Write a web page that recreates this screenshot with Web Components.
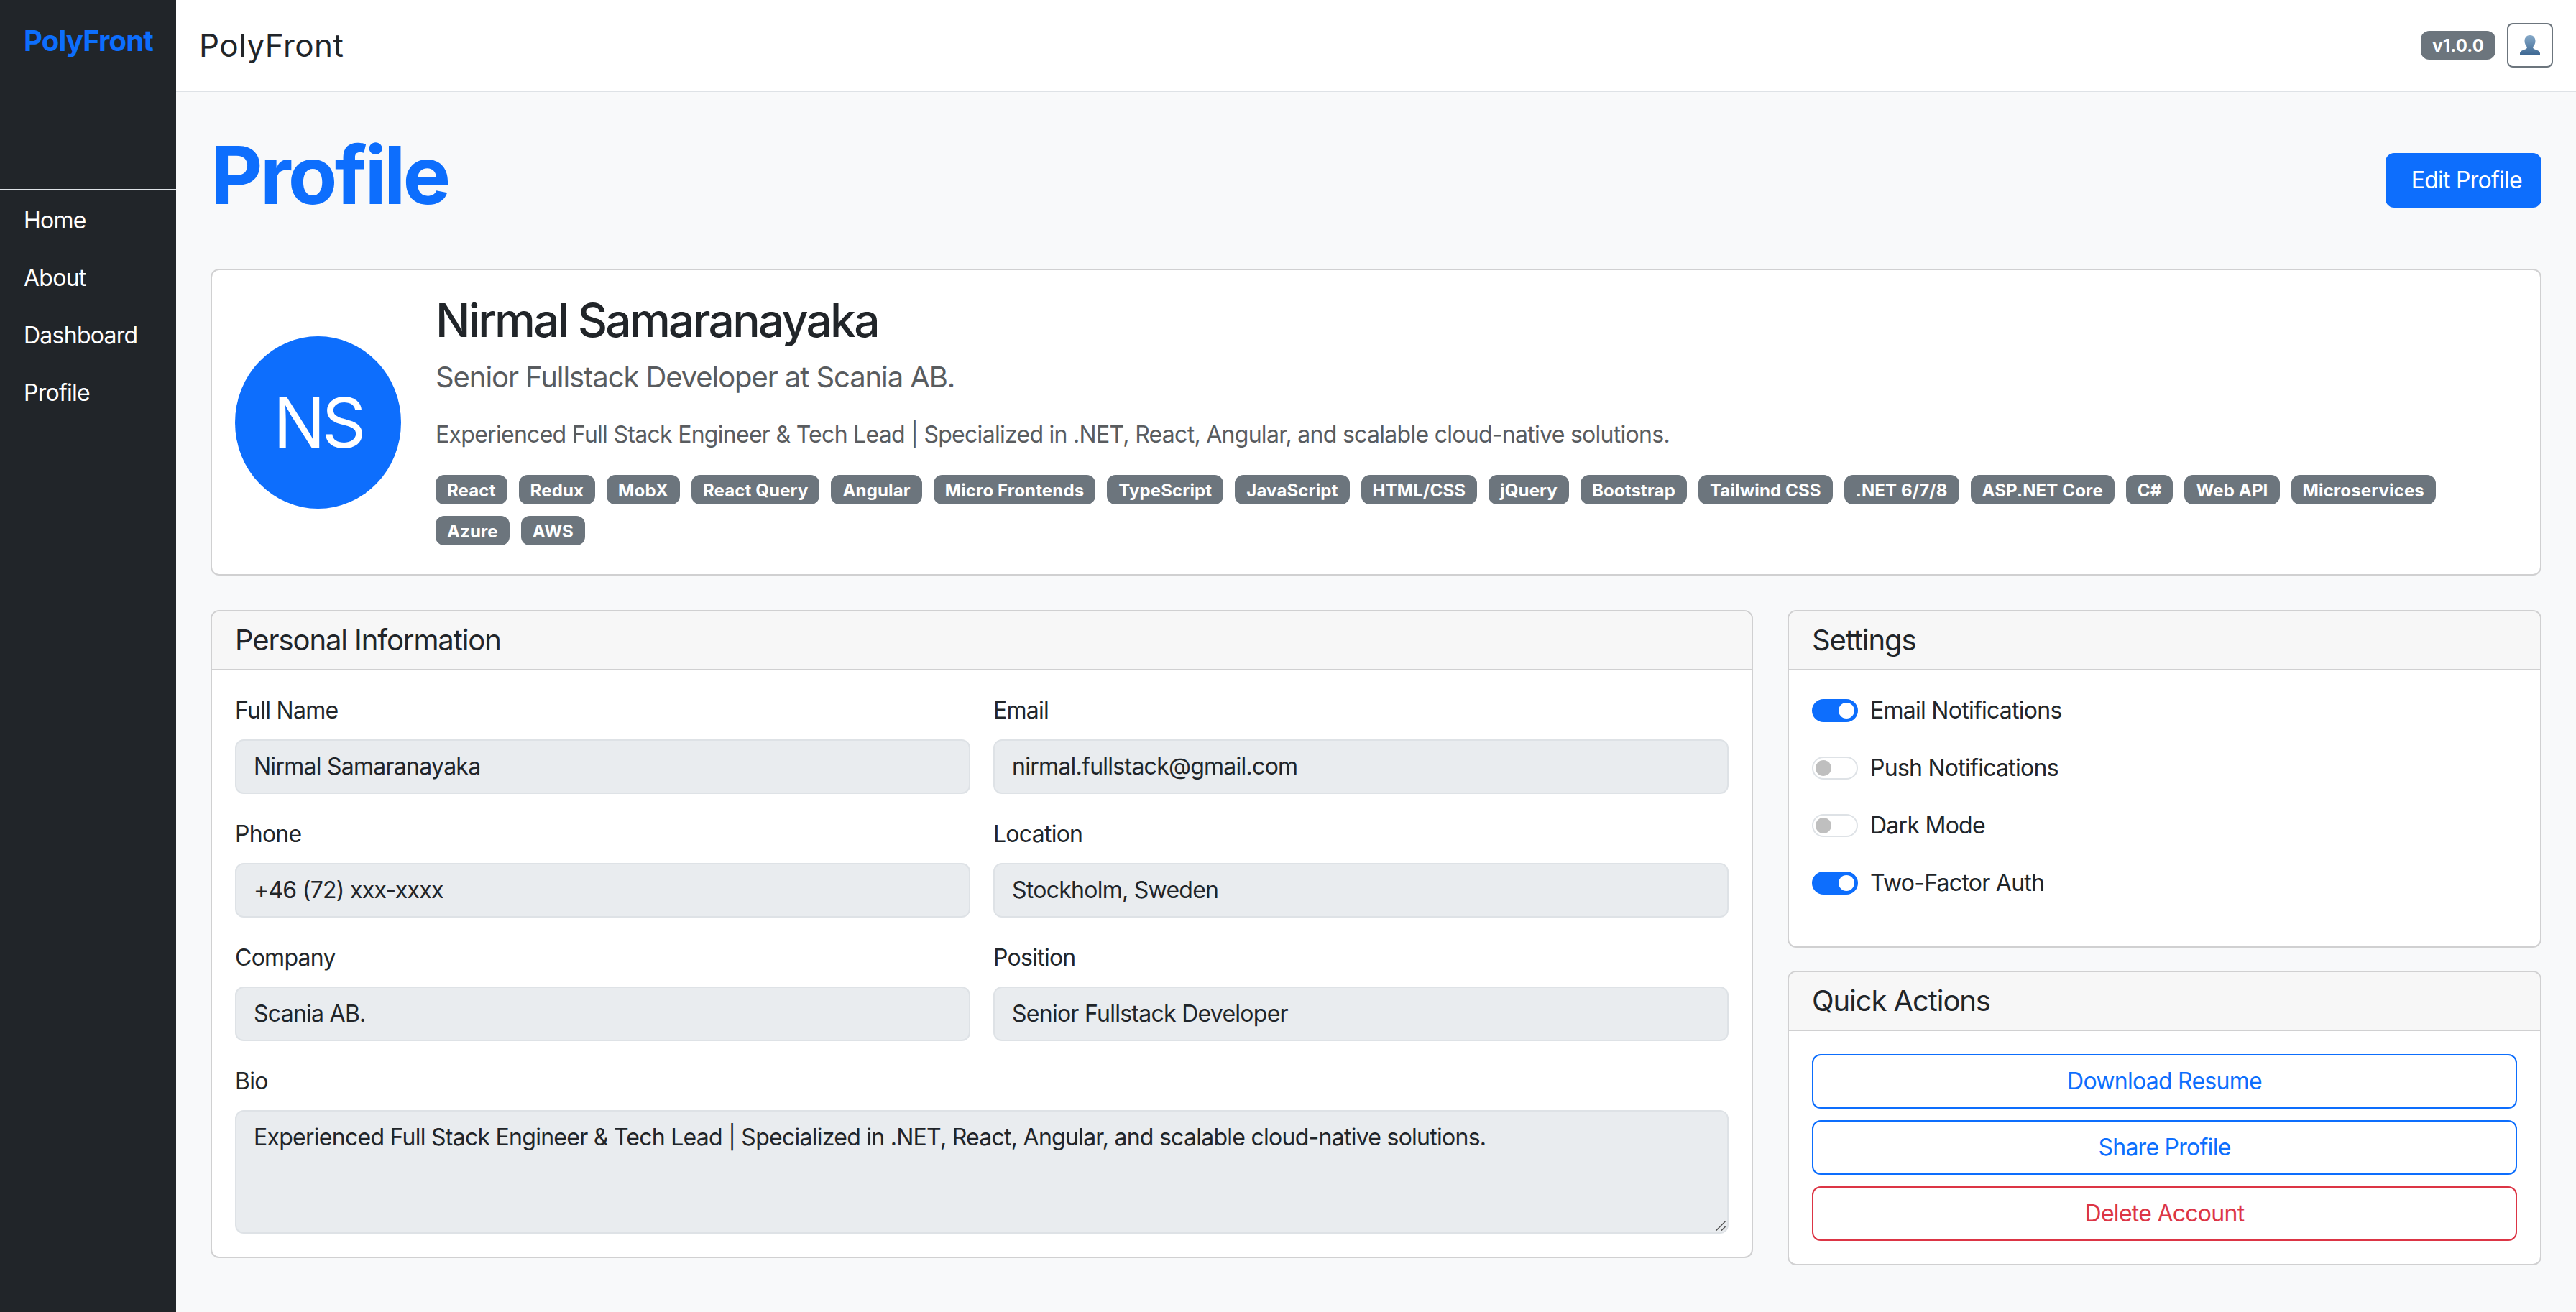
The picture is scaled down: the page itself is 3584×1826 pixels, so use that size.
<!doctype html>
<html>
<head>
<meta charset="utf-8">
<title>PolyFront</title>
<style>
  html,body {margin:0;height:100%}
  body {font-family:Inter,"Liberation Sans",sans-serif;font-size:32px;line-height:1.5;color:#212529;background:#f8f9fa}
</style>
</head>
<body>

<template id=pf-shell-template>
  <style>
    :host {display:grid;grid-template-columns:245px minmax(0,1fr);grid-template-rows:128px 1fr;height:1826px;overflow:hidden}
    .side {grid-row:1 / span 2;display:block}
    .main {display:block;padding:48px 48px 0;background:#f8f9fa}
  </style>
  <div class=side><slot name=side></slot></div>
  <slot name=top></slot>
  <div class=main><slot></slot></div>
</template>

<template id=pf-sidebar-template>
  <style>
    :host {display:flex;flex-direction:column;height:100%;background:#212529;color:#fff}
    .brand {box-sizing:border-box;height:265px;padding:33px 0 0 33px;font-size:40px;line-height:48px;font-weight:700;letter-spacing:-.021em;color:#0d6efd;border-bottom:2px solid #dee2e6}
    nav {display:flex;flex-direction:column;padding-top:2px}
  </style>
  <div class=brand id=brand></div>
  <nav><slot></slot></nav>
</template>

<template id=pf-nav-link-template>
  <style>
    :host {display:block;padding:16px 33px;font-size:32px;line-height:48px;letter-spacing:-.023em;color:#fff}
  </style>
  <slot></slot>
</template>

<template id=pf-topbar-template>
  <style>
    :host {display:flex;align-items:center;justify-content:space-between;box-sizing:border-box;height:128px;padding:0 32px;background:#fff;border-bottom:2px solid #dee2e6}
    .title {font-size:44px;line-height:66px;letter-spacing:.01em;color:#212529}
    .right {display:flex;align-items:center;gap:16px}
    .ver {font-size:24px;line-height:24px;font-weight:700;letter-spacing:.005em;color:#fff;background:#6c757d;border-radius:12px;padding:9px 16px 7px}
    .usr {display:flex;align-items:center;justify-content:center;box-sizing:border-box;width:64px;height:62px;border:2px solid #6c757d;border-radius:8px}
    .usr svg {display:block;width:28px;height:28px}
  </style>
  <div class=title id=title></div>
  <div class=right>
    <span class=ver id=ver></span>
    <span class=usr>
      <svg viewBox="0 0 28 28"><defs><linearGradient id=bust x1=0 y1=0 x2=0 y2=1><stop offset=0 stop-color="#86a9c8"/><stop offset=1 stop-color="#3d6792"/></linearGradient></defs><path fill="url(#bust)" d="M14 0C18.5 0 21.5 3.5 21.5 8C21.5 11.5 20 14.5 18 16.5C18 18 19 19 21 19.8C24.5 21 28 22 28 25.5L28 27Q28 28 27 28L1 28Q0 28 0 27L0 25.5C0 22 3.5 21 7 19.8C9 19 10 18 10 16.5C8 14.5 6.5 11.5 6.5 8C6.5 3.5 9.5 0 14 0Z"/></svg>
    </span>
  </div>
</template>

<template id=pf-page-header-template>
  <style>
    :host {display:flex;align-items:center;justify-content:space-between;margin-bottom:48px}
    h1 {margin:0 0 16px;font-size:112px;line-height:134.4px;font-weight:700;letter-spacing:-.034em;color:#0d6efd}
  </style>
  <h1 id=head></h1>
  <slot></slot>
</template>

<template id=pf-button-template>
  <style>
    :host {display:block;box-sizing:border-box;height:76px;padding:12px 24px;border:2px solid #0d6efd;border-radius:12px;font-size:32px;line-height:48px;letter-spacing:-.023em;text-align:center;color:#0d6efd;background:transparent}
    :host([variant=primary]) {display:inline-block;background:#0d6efd;color:#fff;padding-left:34px;padding-right:25px}
    :host([variant=danger]) {border-color:#dc3545;color:#dc3545}
  </style>
  <slot></slot>
</template>

<template id=pf-summary-template>
  <style>
    :host {display:flex;align-items:center;box-sizing:border-box;padding:32px;background:#fff;border:2px solid #d0d0d1;border-radius:12px;margin-bottom:48px}
    .avatar {flex:none;width:231px;height:240px;margin-right:48px;border-radius:50%;background:#0d6efd;color:#fff;display:flex;align-items:center;justify-content:center;font-size:96px;line-height:1;letter-spacing:-.05em}
    .info {flex:1;min-width:0}
    h2 {margin:0 0 16px;font-size:64px;line-height:76.8px;font-weight:500;letter-spacing:-.042em;color:#212529}
    .role {margin:0 0 32px;font-size:40px;line-height:48px;font-weight:400;letter-spacing:-.027em;color:#595c5f}
    .bio {margin:0 0 32px;font-size:32px;line-height:48px;letter-spacing:-.0223em;color:#595c5f}
    .tags {display:flex;flex-wrap:wrap;gap:16px;padding-bottom:8px}
  </style>
  <div class=avatar id=initials></div>
  <div class=info>
    <h2 id=name></h2>
    <div class=role id=role></div>
    <div class=bio id=bio></div>
    <div class=tags><slot></slot></div>
  </div>
</template>

<template id=pf-tag-template>
  <style>
    :host {display:block;box-sizing:border-box;height:41px;padding:10px 16px 7px;font-size:24px;line-height:24px;font-weight:700;letter-spacing:.006em;color:#fff;background:#6c757d;border-radius:12px;white-space:nowrap}
  </style>
  <slot></slot>
</template>

<template id=pf-columns-template>
  <style>
    :host {display:grid;grid-template-columns:2146fr 1049fr;gap:48px;align-items:start}
    .stack {display:flex;flex-direction:column;gap:32px}
  </style>
  <div><slot></slot></div>
  <div class=stack><slot name=aside></slot></div>
</template>

<template id=pf-card-template>
  <style>
    :host {display:block;background:#fff;border:2px solid #d0d0d1;border-radius:12px;overflow:hidden}
    header {box-sizing:border-box;height:82px;padding:16px 32px;font-size:40px;line-height:48px;letter-spacing:-.027em;background:#f7f7f7;border-bottom:2px solid #d0d0d1;color:#212529}
    .body {padding:32px}
  </style>
  <header id=head></header>
  <div class=body><slot></slot></div>
</template>

<template id=pf-form-grid-template>
  <style>
    :host {display:grid;grid-template-columns:1fr 1fr;column-gap:32px;row-gap:32px}
    ::slotted([wide]) {grid-column:1 / span 2}
  </style>
  <slot></slot>
</template>

<template id=pf-field-template>
  <style>
    :host {display:block}
    label {display:block;margin-bottom:16px;font-size:32px;line-height:48px;letter-spacing:-.023em;color:#212529}
    .input {position:relative;box-sizing:border-box;min-height:76px;padding:12px 24px;background:#e9ecef;border:2px solid #dee2e6;border-radius:12px;font-size:32px;line-height:48px;letter-spacing:-.023em;color:#212529}
    :host([wide]) .input {height:172px}
    .grip {display:none;position:absolute;right:2px;bottom:2px;width:20px;height:20px}
    :host([wide]) .grip {display:block}
  </style>
  <label id=label></label>
  <div class=input><slot></slot>
    <svg class=grip viewBox="0 0 20 20"><path d="M6.3 20L19.6 6.7M13.6 20L19.6 14" stroke="#555" stroke-width="1.5" fill="none"/></svg>
  </div>
</template>

<template id=pf-switch-template>
  <style>
    :host {display:flex;align-items:flex-start;font-size:32px;line-height:48px;letter-spacing:-.023em;height:48px;margin-bottom:32px;color:#212529}
    .track {flex:none;position:relative;box-sizing:border-box;width:64px;height:32px;margin:8px 17px 0 0;border-radius:32px;background:#fff;border:2px solid #dee2e6}
    .knob {position:absolute;left:3px;top:3px;width:22px;height:22px;border-radius:50%;background:#bfbfbf}
    :host([checked]) .track {background:#0d6efd;border-color:#0d6efd}
    :host([checked]) .knob {left:35px;background:#fff}
  </style>
  <span class=track><span class=knob></span></span>
  <slot></slot>
</template>

<template id=pf-actions-template>
  <style>
    :host {display:flex;flex-direction:column;gap:16px}
  </style>
  <slot></slot>
</template>

<pf-shell>
  <pf-sidebar slot=side brand="PolyFront">
    <pf-nav-link>Home</pf-nav-link>
    <pf-nav-link>About</pf-nav-link>
    <pf-nav-link>Dashboard</pf-nav-link>
    <pf-nav-link>Profile</pf-nav-link>
  </pf-sidebar>
  <pf-topbar slot=top heading="PolyFront" version="v1.0.0"></pf-topbar>

  <pf-page-header heading="Profile">
    <pf-button variant=primary>Edit Profile</pf-button>
  </pf-page-header>

  <pf-summary initials="NS" name="Nirmal Samaranayaka" role="Senior Fullstack Developer at Scania AB." bio="Experienced Full Stack Engineer &amp; Tech Lead | Specialized in .NET, React, Angular, and scalable cloud-native solutions.">
    <pf-tag>React</pf-tag><pf-tag>Redux</pf-tag><pf-tag>MobX</pf-tag><pf-tag>React Query</pf-tag><pf-tag>Angular</pf-tag><pf-tag>Micro Frontends</pf-tag><pf-tag>TypeScript</pf-tag><pf-tag>JavaScript</pf-tag><pf-tag>HTML/CSS</pf-tag><pf-tag>jQuery</pf-tag><pf-tag>Bootstrap</pf-tag><pf-tag>Tailwind CSS</pf-tag><pf-tag>.NET 6/7/8</pf-tag><pf-tag>ASP.NET Core</pf-tag><pf-tag>C#</pf-tag><pf-tag>Web API</pf-tag><pf-tag>Microservices</pf-tag><pf-tag>Azure</pf-tag><pf-tag>AWS</pf-tag>
  </pf-summary>

  <pf-columns>
    <pf-card heading="Personal Information">
      <pf-form-grid>
        <pf-field label="Full Name">Nirmal Samaranayaka</pf-field>
        <pf-field label="Email">nirmal.fullstack@gmail.com</pf-field>
        <pf-field label="Phone">+46 (72) xxx-xxxx</pf-field>
        <pf-field label="Location">Stockholm, Sweden</pf-field>
        <pf-field label="Company">Scania AB.</pf-field>
        <pf-field label="Position">Senior Fullstack Developer</pf-field>
        <pf-field label="Bio" wide>Experienced Full Stack Engineer &amp; Tech Lead | Specialized in .NET, React, Angular, and scalable cloud-native solutions.</pf-field>
      </pf-form-grid>
    </pf-card>
    <pf-card slot=aside heading="Settings">
      <pf-switch checked>Email Notifications</pf-switch>
      <pf-switch>Push Notifications</pf-switch>
      <pf-switch>Dark Mode</pf-switch>
      <pf-switch checked>Two-Factor Auth</pf-switch>
    </pf-card>
    <pf-card slot=aside heading="Quick Actions">
      <pf-actions>
        <pf-button>Download Resume</pf-button>
        <pf-button>Share Profile</pf-button>
        <pf-button variant=danger>Delete Account</pf-button>
      </pf-actions>
    </pf-card>
  </pf-columns>
</pf-shell>

<script>
  // every element clones its own template, attributes fill the named spots
  function define(tag,fill){
    customElements.define(tag,class extends HTMLElement {
      constructor(){
        super();
        var shadow = this.attachShadow({mode:"open"});
        shadow.appendChild(document.getElementById(tag+"-template").content.cloneNode(true));
      }
      connectedCallback(){
        if(fill) fill(this,id=>this.shadowRoot.getElementById(id));
      }
    });
  }

  define('pf-shell');
  define('pf-sidebar',(el,$)=>{$('brand').textContent = el.getAttribute('brand')});
  define('pf-nav-link');
  define('pf-topbar',(el,$)=>{
    $('title').textContent = el.getAttribute('heading');
    $('ver').textContent   = el.getAttribute('version');
  });
  define('pf-page-header',(el,$)=>{$('head').textContent = el.getAttribute('heading')});
  define('pf-button');
  define('pf-summary',(el,$)=>{
    ['initials','name','role','bio'].forEach(k=>$(k).textContent = el.getAttribute(k));
  });
  define('pf-tag');
  define('pf-columns');
  define('pf-card',(el,$)=>{$('head').textContent = el.getAttribute('heading')});
  define('pf-form-grid');
  define('pf-field',(el,$)=>{$('label').textContent = el.getAttribute('label')});
  define('pf-switch');
  define('pf-actions');
</script>
</body>
</html>
